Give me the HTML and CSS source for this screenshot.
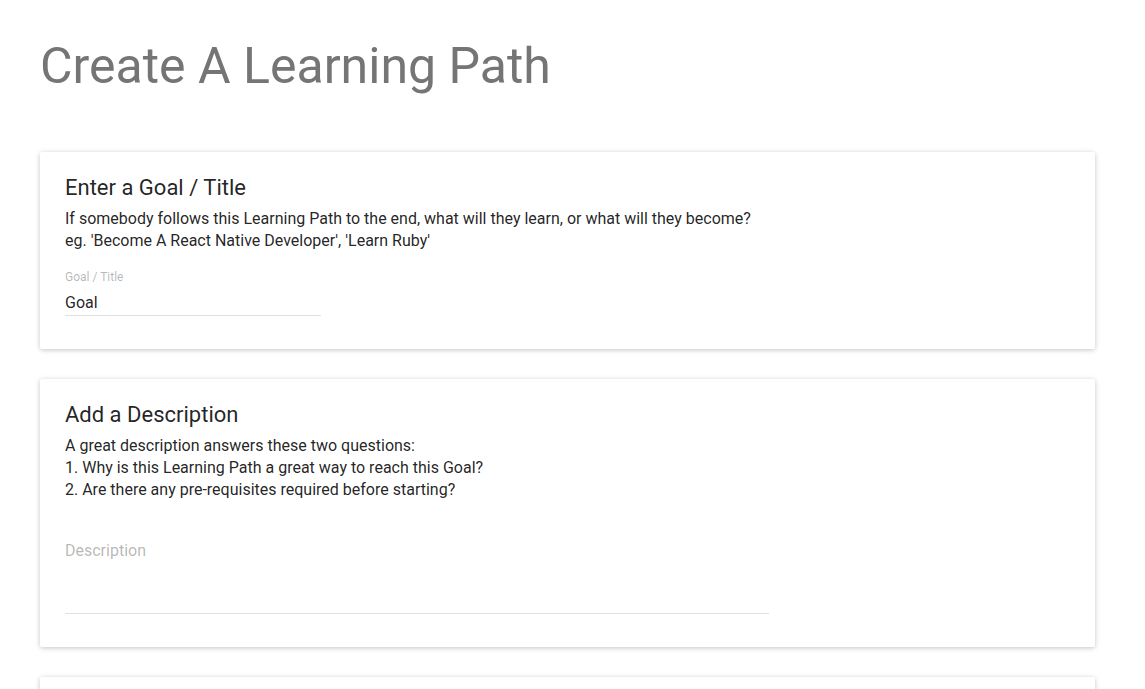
FILE: index.html
```html
<!DOCTYPE html>
<html>
<head>
<meta charset="utf-8">
<link rel="stylesheet" href="styles.css">
</head>
<body>
<main class="page">
  <h1 class="page-title">Create A Learning Path</h1>
  <section class="card">
    <h2 class="card-title">Enter a Goal / Title</h2>
    <p class="card-text">If somebody follows this Learning Path to the end, what will they learn, or what will they become?<br>eg. 'Become A React Native Developer', 'Learn Ruby'</p>
    <div class="field field-goal">
      <label class="field-label">Goal / Title</label>
      <div class="field-value">Goal</div>
    </div>
  </section>
  <section class="card">
    <h2 class="card-title">Add a Description</h2>
    <p class="card-text">A great description answers these two questions:<br>1. Why is this Learning Path a great way to reach this Goal?<br>2. Are there any pre-requisites required before starting?</p>
    <div class="field field-desc">
      <div class="field-placeholder">Description</div>
    </div>
  </section>
  <section class="card card-cut"></section>
</main>
</body>
</html>
```
FILE: styles.css
```css
html, body {
  margin: 0;
  padding: 0;
  background: #fff;
}
body {
  font-family: Roboto, "Liberation Sans", sans-serif;
  color: rgba(0,0,0,0.87);
  overflow: hidden;
  height: 689px;
}
.page {
  padding: 0 50px 0 40px;
  display: flex;
  flex-direction: column;
  gap: 30px;
}
.page-title {
  margin: 36px 0 26px 0;
  font-size: 50px;
  font-weight: 400;
  line-height: 60px;
  color: #757575;
}
.card {
  background: #fff;
  border-radius: 2px;
  box-shadow: 0 1px 6px rgba(0,0,0,0.12), 0 1px 4px rgba(0,0,0,0.12);
  padding: 22px 25px 33px 25px;
}
.card-title {
  margin: 0;
  font-size: 22px;
  font-weight: 400;
  line-height: 28px;
  color: rgba(0,0,0,0.87);
}
.card-text {
  margin: 6px 0 0 0;
  font-size: 16px;
  line-height: 22px;
}
.field {
  border-bottom: 1px solid #e0e0e0;
}
.field-goal {
  width: 256px;
  margin-top: 17px;
  padding-bottom: 2px;
}
.field-label {
  display: block;
  font-size: 12px;
  line-height: 16px;
  color: rgba(0,0,0,0.3);
}
.field-value {
  margin-top: 8px;
  font-size: 16px;
  line-height: 20px;
}
.field-desc {
  width: 704px;
  margin-top: 38px;
  height: 74px;
}
.field-placeholder {
  font-size: 16px;
  line-height: 24px;
  color: rgba(0,0,0,0.3);
}
.card-cut {
  height: 60px;
  padding: 0;
}
```
